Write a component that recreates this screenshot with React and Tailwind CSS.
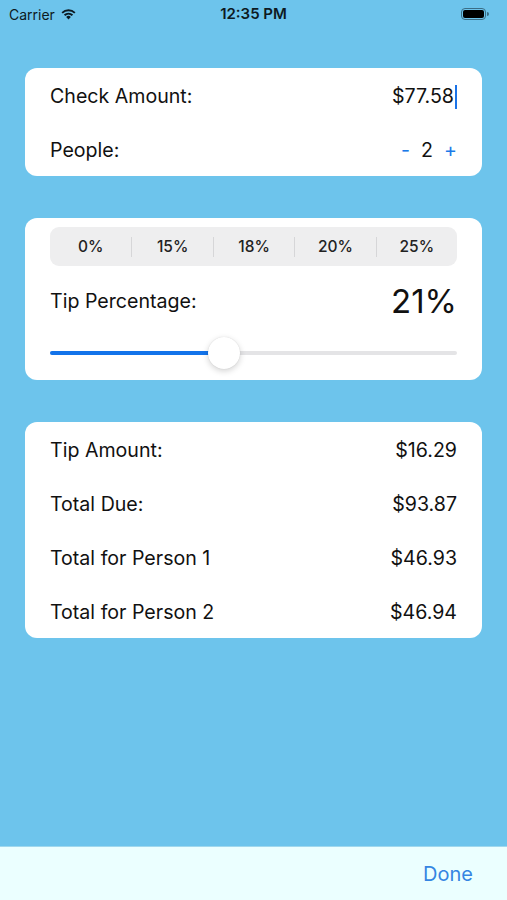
import React, { useState } from 'react'

const font = { fontFamily: 'Inter, "Liberation Sans", sans-serif' }

function StatusBar() {
  return (
    <div className="relative flex h-[28px] items-center px-[9px] text-[#0d1a22]">
      <div className="flex items-center gap-[5px] text-[14px]">
        <span>Carrier</span>
        <svg width="17" height="12" viewBox="0 0 17 12">
          <path d="M8.5 11.5 L6.2 8.9 A3.4 3.4 0 0 1 10.8 8.9 Z" fill="#0d1a22" />
          <path d="M3.9 6.6 A6.6 6.6 0 0 1 13.1 6.6 L11.8 8 A4.8 4.8 0 0 0 5.2 8 Z" fill="#0d1a22" />
          <path d="M1.5 4.2 A10 10 0 0 1 15.5 4.2 L14.2 5.6 A8.1 8.1 0 0 0 2.8 5.6 Z" fill="#0d1a22" />
        </svg>
      </div>
      <div className="absolute left-1/2 -translate-x-1/2 text-[15px] font-semibold">12:35 PM</div>
      <div className="ml-auto flex items-center pr-[9px]">
        <div className="flex h-[12px] w-[25px] items-center rounded-[4px] border border-[#3a6d86] p-[1px]">
          <div className="h-full w-full rounded-[2px] bg-black" />
        </div>
        <div className="ml-[1px] h-[4px] w-[2px] rounded-r-sm bg-[#3a6d86]" />
      </div>
    </div>
  )
}

function Row({ label, children }) {
  return (
    <div className="flex h-[54px] items-center justify-between px-[25px] pt-[4px] text-[19.6px] text-[#111]">
      <span>{label}</span>
      {children}
    </div>
  )
}

export default function App() {
  const [people] = useState(2)
  const tips = ['0%', '15%', '18%', '20%', '25%']

  return (
    <div className="flex h-[900px] w-full flex-col bg-[#6dc4ec]" style={font}>
      <StatusBar />

      <div className="flex flex-col gap-[42px] px-[25px] pt-[40px]">
        <div className="rounded-[12px] bg-white">
          <Row label="Check Amount:">
            <span className="flex items-center">
              $77.58
              <span className="ml-[1px] inline-block h-[24px] w-[2px] bg-[#1a73e8]" />
            </span>
          </Row>
          <Row label="People:">
            <span className="flex items-center gap-[11px]">
              <span className="text-[#1a7ae8]">-</span>
              <span>{people}</span>
              <span className="text-[#1a7ae8]">+</span>
            </span>
          </Row>
        </div>

        <div className="rounded-[12px] bg-white px-[25px] pt-[9px] pb-[8px]">
          <div className="flex h-[39px] items-center rounded-[9px] bg-[#eeeeef]">
            {tips.map((t, i) => (
              <div key={t} className="flex flex-1 items-center">
                {i > 0 && <div className="h-[20px] w-px bg-[#d6d6d8]" />}
                <div className="flex-1 pt-[1px] text-center text-[15.5px] font-medium text-[#222]">{t}</div>
              </div>
            ))}
          </div>
          <div className="flex h-[68px] items-center justify-between pt-[3px] text-[19.6px] text-[#111]">
            <span>Tip Percentage:</span>
            <span className="text-[33px]">21%</span>
          </div>
          <div className="relative flex h-[38px] items-center">
            <div className="h-[4px] w-full rounded-full bg-[#e4e4e6]" />
            <div className="absolute left-0 h-[4px] w-[174px] rounded-full bg-[#1273ea]" />
            <div className="absolute left-[158px] h-[32px] w-[32px] rounded-full bg-white shadow-[0_2px_6px_rgba(0,0,0,0.18),0_0_1px_rgba(0,0,0,0.15)]" />
          </div>
        </div>

        <div className="rounded-[12px] bg-white">
          <Row label="Tip Amount:"><span>$16.29</span></Row>
          <Row label="Total Due:"><span>$93.87</span></Row>
          <Row label="Total for Person 1"><span>$46.93</span></Row>
          <Row label="Total for Person 2"><span>$46.94</span></Row>
        </div>
      </div>

      <div className="mt-auto flex h-[54px] items-center justify-end border-t border-[#9fd8ee] bg-[#ebffff] pr-[34px]">
        <span className="text-[20px] text-[#3585e2]">Done</span>
      </div>
    </div>
  )
}
